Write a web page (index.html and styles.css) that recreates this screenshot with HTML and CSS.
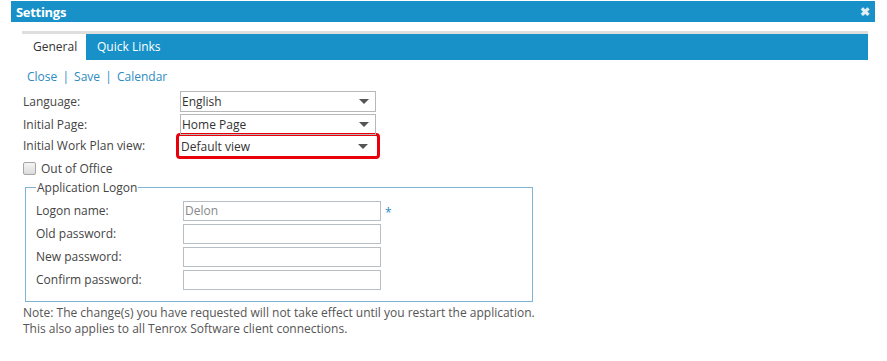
FILE: index.html
```html
<!DOCTYPE html>
<html lang="en">
<head>
  <meta charset="UTF-8">
  <title>Settings</title>
  <link rel="stylesheet" href="styles.css">
</head>
<body>
  <div class="dialog">
    <div class="titlebar">
      <span class="title">Settings</span>
      <span class="close-x">&#10006;</span>
    </div>

    <div class="content">
      <div class="tabs">
        <div class="tab active">General</div>
        <div class="tab">Quick Links</div>
      </div>

      <div class="links">
        <a href="#">Close</a> <span class="sep">|</span>
        <a href="#">Save</a> <span class="sep">|</span>
        <a href="#">Calendar</a>
      </div>

      <div class="settings">
        <div class="form-row">
          <label>Language:</label>
          <div class="select">English<span class="caret"></span></div>
        </div>
        <div class="form-row">
          <label>Initial Page:</label>
          <div class="select">Home Page<span class="caret"></span></div>
        </div>
        <div class="form-row marked">
          <label>Initial Work Plan view:</label>
          <div class="highlight">
            <div class="select">Default view<span class="caret"></span></div>
          </div>
        </div>
      </div>

      <div class="check-row">
        <span class="checkbox"></span>
        <span>Out of Office</span>
      </div>

      <fieldset class="logon">
        <legend>Application Logon</legend>
        <div class="field-row">
          <label>Logon name:</label>
          <div class="text-input filled">Delon</div>
          <span class="required">*</span>
        </div>
        <div class="field-row">
          <label>Old password:</label>
          <div class="text-input"></div>
        </div>
        <div class="field-row">
          <label>New password:</label>
          <div class="text-input"></div>
        </div>
        <div class="field-row">
          <label>Confirm password:</label>
          <div class="text-input"></div>
        </div>
      </fieldset>

      <p class="note">Note: The change(s) you have requested will not take effect until you restart the application.<br>
      This also applies to all Tenrox Software client connections.</p>
    </div>
  </div>
</body>
</html>
```

FILE: styles.css
```css
body {
  margin: 0;
  background: #fff;
  font-family: 'Open Sans', 'Liberation Sans', sans-serif;
  font-size: 12px;
  color: #444;
}

.dialog {
  margin-left: 11px;
  width: 864px;
}

.titlebar {
  height: 21px;
  margin-top: 1px;
  background: #1791c8;
  color: #fff;
  display: flex;
  justify-content: space-between;
  align-items: center;
  padding: 0 5px 0 5px;
}

.title {
  font-weight: bold;
  font-size: 13px;
  letter-spacing: -0.3px;
}

.close-x {
  font-size: 12px;
  font-weight: bold;
  color: #e4eef5;
}

.content {
  padding: 9px 7px 0 11px;
}

.tabs {
  border-top: 3px solid #dedede;
  background: #1791c8;
  height: 26px;
  display: flex;
}

.tab {
  line-height: 26px;
  padding: 0 11px;
  color: #fff;
  font-size: 12px;
}

.tab.active {
  background: #fff;
  color: #333;
  width: 42px;
}

.links {
  margin: 9px 0 0 5px;
  height: 16px;
  line-height: 16px;
}

.links a {
  color: #2b8bc3;
  text-decoration: none;
}

.sep {
  color: #2b8bc3;
  margin: 0 2px;
}

.settings {
  margin-top: 5px;
}

.form-row {
  display: flex;
  align-items: center;
  height: 23px;
  padding-left: 1px;
}

.form-row.marked {
  margin-top: -2px;
}

.form-row label {
  width: 157px;
}

.select {
  position: relative;
  width: 193px;
  height: 19px;
  line-height: 19px;
  border: 1px solid #b8b8b8;
  padding-left: 1px;
  color: #333;
}

.caret {
  position: absolute;
  right: 6px;
  top: 7px;
  border-left: 5px solid transparent;
  border-right: 5px solid transparent;
  border-top: 5px solid #555;
}

.highlight {
  margin-left: -4px;
  border: 3px solid #e8000b;
  border-radius: 4px;
  padding: 0 2px 0 0;
}

.highlight .select {
  border-color: transparent;
  height: 18px;
  line-height: 20px;
}

.check-row {
  display: flex;
  align-items: center;
  height: 18px;
  padding-left: 1px;
  margin-top: 2px;
}

.checkbox {
  width: 11px;
  height: 11px;
  border: 1px solid #a6a6a6;
  border-radius: 2px;
  background: linear-gradient(#f4f4f4, #dcdcdc);
  margin-right: 5px;
}

.logon {
  margin: 2px 0 0 3px;
  width: 496px;
  border: 1px solid #7eb3d6;
  padding: 3px 0 10px 10px;
}

.logon legend {
  padding: 0 1px;
  margin-left: 0;
  color: #444;
}

.field-row {
  display: flex;
  align-items: center;
  height: 23px;
}

.field-row label {
  width: 147px;
}

.text-input {
  width: 195px;
  height: 18px;
  line-height: 18px;
  border: 1px solid #b7bfc4;
  padding-left: 1px;
  color: #888;
}

.required {
  color: #2b8bc3;
  margin: 4px 0 0 4px;
}

.note {
  margin: 3px 0 0 1px;
  line-height: 16px;
  color: #555;
}
```
